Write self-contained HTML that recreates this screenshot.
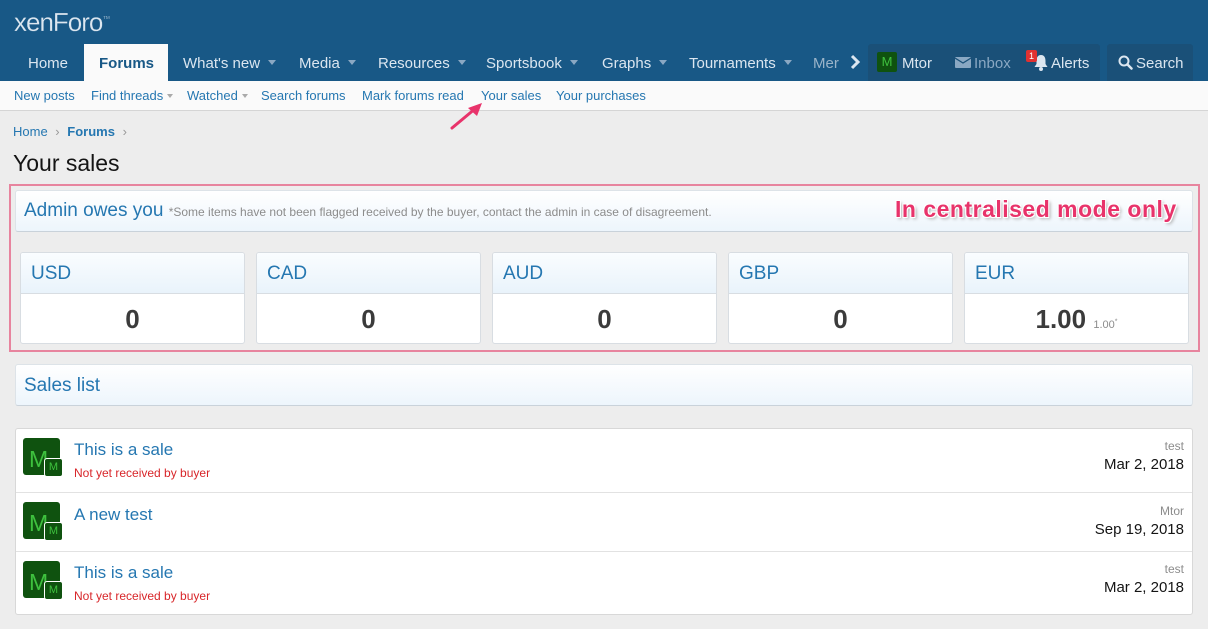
<!DOCTYPE html>
<html><head><meta charset="utf-8"><style>
*{box-sizing:border-box;margin:0;padding:0}
body{width:1208px;height:629px;overflow:hidden;background:#ededed;font-family:"Liberation Sans",Arial,sans-serif;position:relative;color:#141414}
.a{position:absolute}
.hdr{left:0;top:0;width:1208px;height:81px;background:#185886}
.logo{left:14px;top:7px;font-size:26px;color:#dde7f0;letter-spacing:-1px;font-weight:300;-webkit-text-stroke:0.2px #185886}
.nav{top:55px;font-size:15px;color:#dbe6f0}
.tri{display:inline-block;width:0;height:0;border-left:4px solid transparent;border-right:4px solid transparent;border-top:5px solid #8aa8c3;margin-left:8px;vertical-align:3px}
.sub{left:0;top:81px;width:1208px;height:30px;background:#fafafa;border-bottom:1px solid #d5d5d5}
.sl{top:88px;font-size:13px;color:#2577b1}
.stri{display:inline-block;width:0;height:0;border-left:3px solid transparent;border-right:3px solid transparent;border-top:4px solid #aaa;margin-left:4px;vertical-align:2px}
.blk{background:linear-gradient(#fff,#edf5fc);border:1px solid #dde3e8;border-bottom:1px solid #c9d2da;border-radius:3px}
.card{top:252px;width:225px;height:92px;background:#fff;border:1px solid #d8dde2;border-radius:3px;overflow:hidden}
.card .h{height:41px;background:linear-gradient(#fafdff,#e9f3fb);border-bottom:1px solid #d8dde2;font-size:19px;color:#2577b1;padding:10px 0 0 10px}
.card .v{text-align:center;font-size:26px;font-weight:bold;color:#3b3b3b;padding-top:10px}
.row{left:16px;width:1176px;border-bottom:1px solid #e2e2e2}
.av{left:7px;width:37px;height:37px;background:#0f520f;border-radius:3px;color:#3ec13e;font-size:23px;padding:8px 0 0 6px}
.av2{left:28px;width:19px;height:19px;background:#0f520f;border:1px solid #fff;border-radius:3px;color:#3ec13e;font-size:11px;text-align:center;line-height:17px}
.t{left:58px;font-size:17px;color:#2577b1}
.r{left:58px;font-size:12px;color:#d8262a}
.u{right:8px;font-size:12px;color:#8c8c8c;text-align:right}
.d{right:8px;font-size:15px;color:#141414}
</style></head><body>
<div class="a hdr"></div>
<div class="a logo">xenForo<sup style="font-size:8px">™</sup></div>
<div class="a" style="left:84px;top:44px;width:84px;height:37px;background:#fafafa"></div>
<div class="a nav" style="left:28px">Home</div>
<div class="a nav" style="left:99px;color:#185886;font-weight:bold">Forums</div>
<div class="a nav" style="left:183px">What's new<span class="tri"></span></div>
<div class="a nav" style="left:299px">Media<span class="tri"></span></div>
<div class="a nav" style="left:378px">Resources<span class="tri"></span></div>
<div class="a nav" style="left:486px">Sportsbook<span class="tri"></span></div>
<div class="a nav" style="left:602px">Graphs<span class="tri"></span></div>
<div class="a nav" style="left:689px">Tournaments<span class="tri"></span></div>
<div class="a nav" style="left:813px;color:#9bb4c9">Mer</div>
<svg class="a" style="left:849px;top:54px" width="12" height="16"><polyline points="3,2 9,8 3,14" fill="none" stroke="#dbe6f0" stroke-width="3"/></svg>
<div class="a" style="left:868px;top:44px;width:232px;height:37px;background:#1a5078;border-radius:3px 3px 0 0"></div>
<div class="a" style="left:1107px;top:44px;width:86px;height:37px;background:#1a5078;border-radius:3px 3px 0 0"></div>
<div class="a" style="left:877px;top:52px;width:20px;height:20px;background:#0f520f;border-radius:2px;color:#3ec13e;font-size:13px;text-align:center;line-height:20px">M</div>
<div class="a nav" style="left:902px">Mtor</div>
<svg class="a" style="left:955px;top:56px" width="16" height="13"><rect x="0" y="1" width="16" height="11" rx="1" fill="#8aa8c3"/><polyline points="0,2 8,7 16,2" fill="none" stroke="#1a5078" stroke-width="1.2"/></svg>
<div class="a nav" style="left:974px;color:#8aa8c3">Inbox</div>
<svg class="a" style="left:1033px;top:54px" width="16" height="17"><path d="M8 1 C4.5 1 3.5 4 3.5 7 L3.5 10 L1.5 13 L14.5 13 L12.5 10 L12.5 7 C12.5 4 11.5 1 8 1 Z" fill="#dbe6f0"/><circle cx="8" cy="15" r="2" fill="#dbe6f0"/></svg>
<div class="a" style="left:1026px;top:50px;width:11px;height:12px;background:#e03131;border-radius:2px;color:#fff;font-size:9px;text-align:center;line-height:12px">1</div>
<div class="a nav" style="left:1051px">Alerts</div>
<svg class="a" style="left:1118px;top:55px" width="15" height="15"><circle cx="6" cy="6" r="4.5" fill="none" stroke="#dbe6f0" stroke-width="2"/><line x1="9.5" y1="9.5" x2="13.5" y2="13.5" stroke="#dbe6f0" stroke-width="2.5" stroke-linecap="round"/></svg>
<div class="a nav" style="left:1136px">Search</div>
<div class="a sub"></div>
<div class="a sl" style="left:14px">New posts</div>
<div class="a sl" style="left:91px">Find threads<span class="stri"></span></div>
<div class="a sl" style="left:187px">Watched<span class="stri"></span></div>
<div class="a sl" style="left:261px">Search forums</div>
<div class="a sl" style="left:362px">Mark forums read</div>
<div class="a sl" style="left:481px">Your sales</div>
<div class="a sl" style="left:556px">Your purchases</div>
<svg class="a" style="left:446px;top:102px" width="40" height="30"><line x1="6" y1="26" x2="30" y2="6" stroke="#e8336b" stroke-width="3" stroke-linecap="round"/><polygon points="36,1 22,6 31,14" fill="#e8336b"/></svg>
<div class="a" style="left:13px;top:124px;font-size:13px;color:#2577b1">Home <span style="color:#999;margin:0 4px">›</span> <b>Forums</b> <span style="color:#999;margin:0 4px">›</span></div>
<div class="a" style="left:13px;top:150px;font-size:23px">Your sales</div>
<div class="a" style="left:9px;top:184px;width:1191px;height:168px;border:2px solid #e7849e"></div>
<div class="a blk" style="left:15px;top:190px;width:1178px;height:42px"></div>
<div class="a" style="left:24px;top:200px;font-size:19px;color:#2577b1">Admin owes you <span style="font-size:12px;color:#8c8c8c">*Some items have not been flagged received by the buyer, contact the admin in case of disagreement.</span></div>
<div class="a" style="left:895px;top:196px;font-size:23px;font-weight:bold;letter-spacing:0.5px;color:#e8336b;text-shadow:1px 1px 0 #fff,-1px -1px 0 #fff,1px -1px 0 #fff,-1px 1px 0 #fff,2px 2px 3px #aaa">In centralised mode only</div>
<div class="a card" style="left:20px"><div class="h">USD</div><div class="v">0</div></div>
<div class="a card" style="left:256px"><div class="h">CAD</div><div class="v">0</div></div>
<div class="a card" style="left:492px"><div class="h">AUD</div><div class="v">0</div></div>
<div class="a card" style="left:728px"><div class="h">GBP</div><div class="v">0</div></div>
<div class="a card" style="left:964px"><div class="h">EUR</div><div class="v">1.00 <span style="font-size:11px;font-weight:normal;color:#8c8c8c">1.00<sup style="font-size:7px">*</sup></span></div></div>
<div class="a blk" style="left:15px;top:364px;width:1178px;height:42px"></div>
<div class="a" style="left:24px;top:375px;font-size:19px;color:#2577b1">Sales list</div>
<div class="a" style="left:15px;top:428px;width:1178px;height:187px;background:#fff;border:1px solid #d8d8d8;border-radius:3px"></div>
<div class="a row" style="top:429px;height:64px">
<div class="a av" style="top:9px">M</div><div class="a av2" style="top:29px">M</div>
<div class="a t" style="top:11px">This is a sale</div><div class="a r" style="top:37px">Not yet received by buyer</div>
<div class="a u" style="top:10px">test</div><div class="a d" style="top:27px">Mar 2, 2018</div></div>
<div class="a row" style="top:493px;height:59px">
<div class="a av" style="top:9px">M</div><div class="a av2" style="top:29px">M</div>
<div class="a t" style="top:12px">A new test</div>
<div class="a u" style="top:11px">Mtor</div><div class="a d" style="top:28px">Sep 19, 2018</div></div>
<div class="a row" style="top:552px;height:62px;border-bottom:none">
<div class="a av" style="top:9px">M</div><div class="a av2" style="top:29px">M</div>
<div class="a t" style="top:11px">This is a sale</div><div class="a r" style="top:37px">Not yet received by buyer</div>
<div class="a u" style="top:10px">test</div><div class="a d" style="top:27px">Mar 2, 2018</div></div>
</body></html>
